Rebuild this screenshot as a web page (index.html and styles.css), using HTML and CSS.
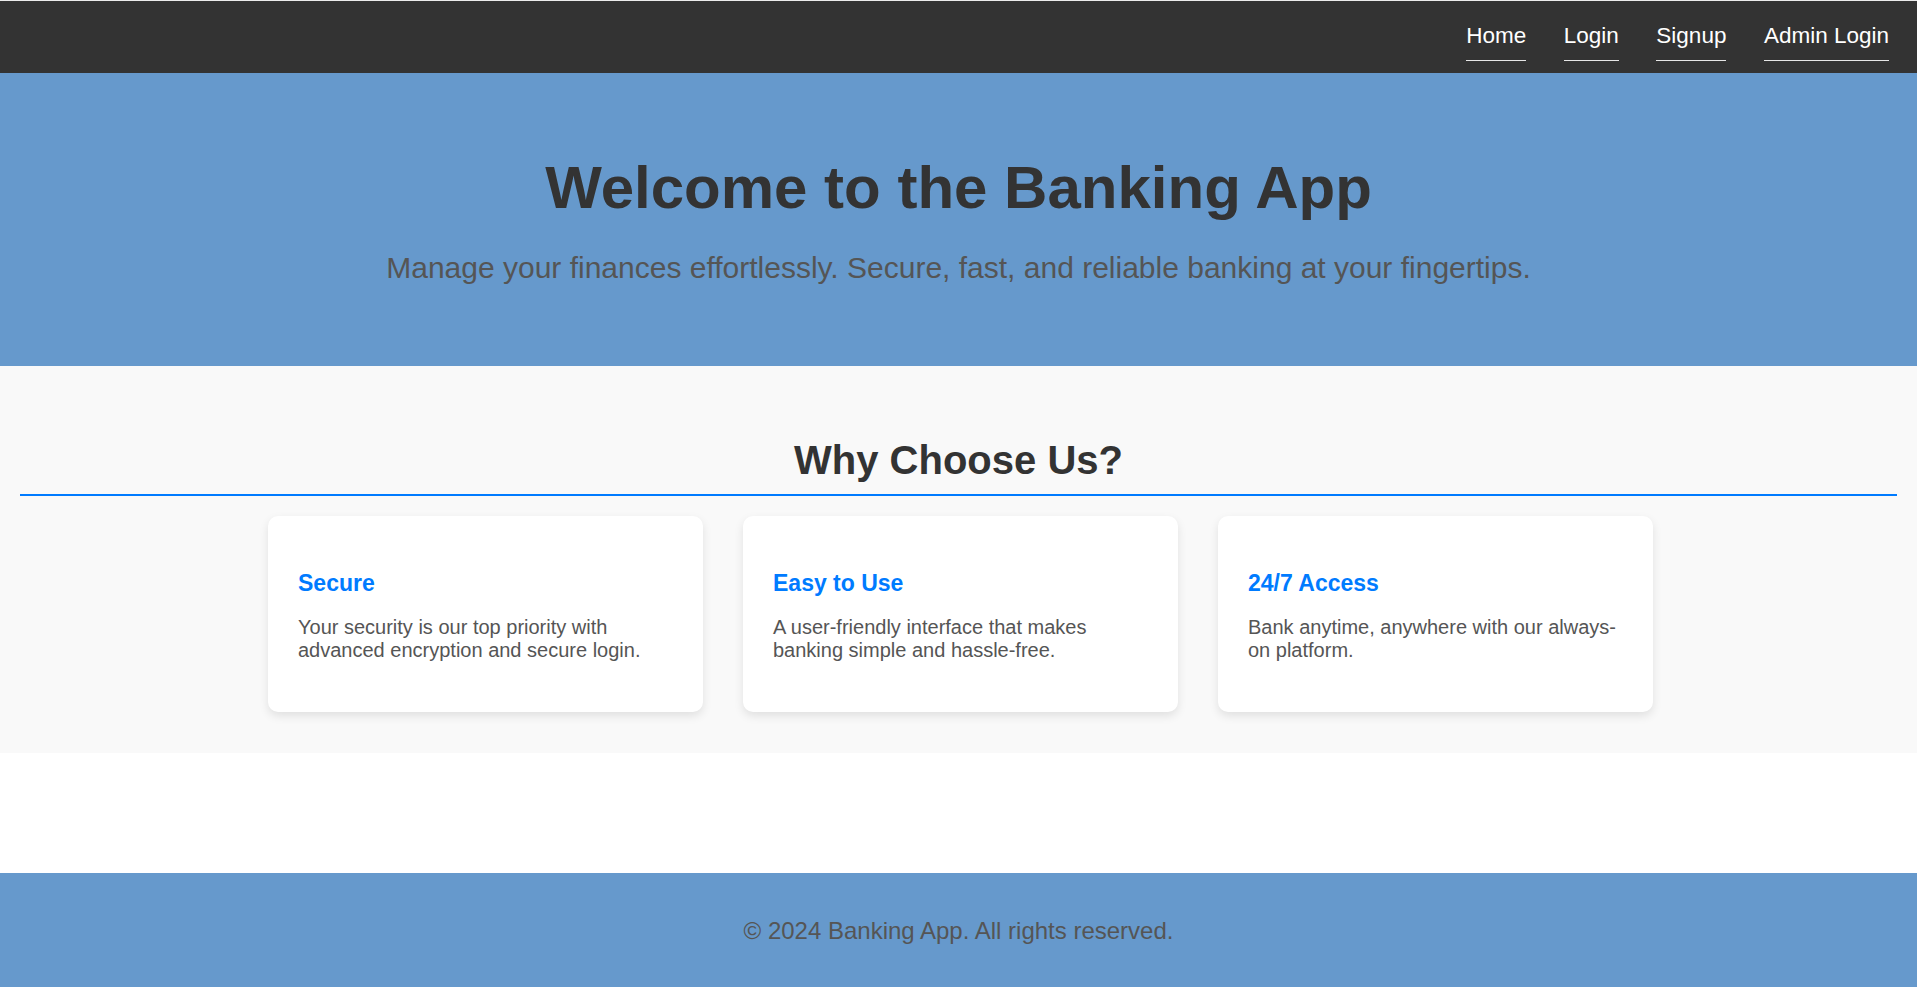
FILE: index.html
```html
<!DOCTYPE html>
<html lang="en">
<head>
<meta charset="UTF-8">
<title>Banking App</title>
<link rel="stylesheet" href="styles.css">
</head>
<body>
<div class="page">
  <nav class="navbar">
    <a class="nav-link" href="#">Home</a>
    <a class="nav-link" href="#">Login</a>
    <a class="nav-link" href="#">Signup</a>
    <a class="nav-link" href="#">Admin Login</a>
  </nav>
  <header class="hero">
    <h1 class="hero-title">Welcome to the Banking App</h1>
    <p class="hero-sub">Manage your finances effortlessly. Secure, fast, and reliable banking at your fingertips.</p>
  </header>
  <section class="features">
    <h2 class="features-title">Why Choose Us?</h2>
    <div class="cards">
      <div class="card">
        <h3 class="card-title">Secure</h3>
        <p class="card-text">Your security is our top priority with advanced encryption and secure login.</p>
      </div>
      <div class="card">
        <h3 class="card-title">Easy to Use</h3>
        <p class="card-text">A user-friendly interface that makes banking simple and hassle-free.</p>
      </div>
      <div class="card">
        <h3 class="card-title">24/7 Access</h3>
        <p class="card-text">Bank anytime, anywhere with our always-on platform.</p>
      </div>
    </div>
  </section>
  <footer class="footer">
    <p class="footer-text">&copy; 2024 Banking App. All rights reserved.</p>
  </footer>
</div>
</body>
</html>
```
FILE: styles.css
```css
html, body {
  margin: 0;
  padding: 0;
  background: #ffffff;
  font-family: "Liberation Sans", Arial, sans-serif;
}

.page {
  border-top: 1px solid #ececec;
}

.navbar {
  box-sizing: border-box;
  height: 72px;
  background: #333333;
  display: flex;
  justify-content: flex-end;
  align-items: flex-start;
  padding: 22px 28px 0 20px;
  gap: 37.5px;
}

.nav-link {
  color: #ffffff;
  text-decoration: none;
  font-size: 22.5px;
  line-height: 25px;
  padding-bottom: 12px;
  border-bottom: 1px solid #e6e6e6;
}

.hero {
  background: #6699cc;
  text-align: center;
  padding: 80px 20px 81px;
}

.hero-title {
  margin: 0 0 29px;
  font-size: 60px;
  line-height: 69px;
  font-weight: bold;
  color: #333333;
}

.hero-sub {
  margin: 0;
  font-size: 30px;
  line-height: 34px;
  color: #555555;
}

.features {
  background: #f9f9f9;
  padding: 40px 20px 41px;
  margin-bottom: 120px;
  text-align: center;
}

.features-title {
  margin: 31px 0 20px;
  font-size: 40px;
  line-height: 46px;
  font-weight: bold;
  color: #333333;
  padding-bottom: 11px;
  border-bottom: 2px solid #007bff;
}

.cards {
  display: flex;
  justify-content: center;
  gap: 40px;
  padding-left: 4px;
}

.card {
  box-sizing: border-box;
  width: 435px;
  height: 196px;
  background: #ffffff;
  border-radius: 10px;
  box-shadow: 0 4px 10px rgba(0, 0, 0, 0.1);
  padding: 30px;
  text-align: left;
}

.card-title {
  margin: 24px 0 19px;
  font-size: 23px;
  line-height: 27px;
  font-weight: bold;
  color: #007bff;
}

.card-text {
  margin: 0;
  font-size: 20px;
  line-height: 23px;
  color: #555555;
}

.footer {
  background: #6699cc;
  text-align: center;
  padding: 20px 20px 19px;
}

.footer-text {
  margin: 24px 0;
  font-size: 24px;
  line-height: 27px;
  color: #555555;
}
```
